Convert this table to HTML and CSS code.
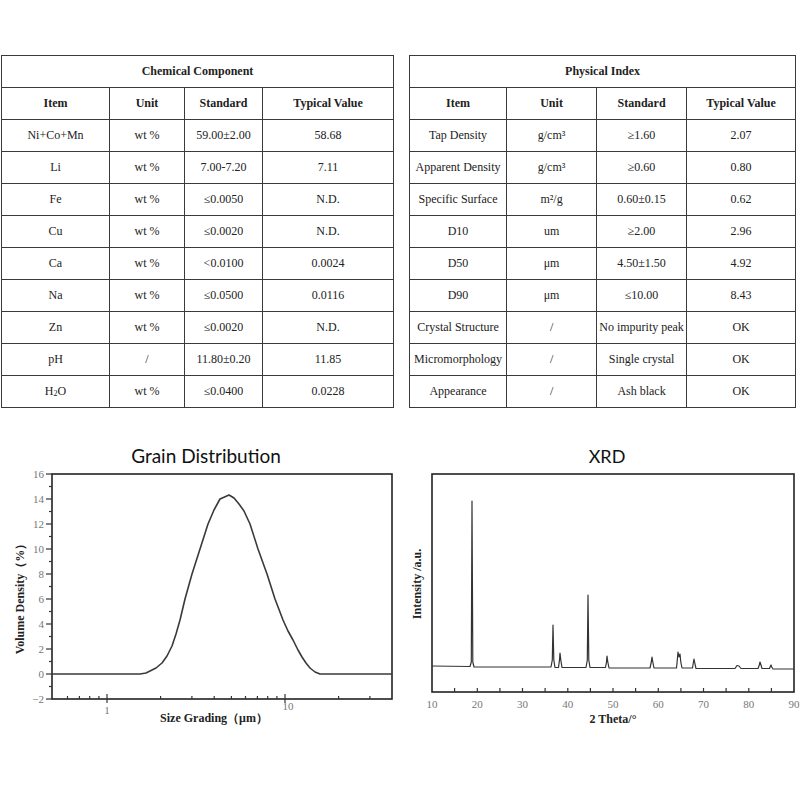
FILE: index.html
```html
<!DOCTYPE html>
<html>
<head>
<meta charset="utf-8">
<link rel="stylesheet" href="styles.css">
</head>
<body>
<div class="tables">
  <table class="spec spec-left">
    <colgroup><col style="width:108px"><col style="width:75px"><col style="width:78px"><col style="width:131px"></colgroup>
    <tr class="title"><td colspan="4">Chemical Component</td></tr>
    <tr class="head"><td>Item</td><td>Unit</td><td>Standard</td><td>Typical Value</td></tr>
    <tr><td>Ni+Co+Mn</td><td>wt %</td><td>59.00±2.00</td><td>58.68</td></tr>
    <tr><td>Li</td><td>wt %</td><td>7.00-7.20</td><td>7.11</td></tr>
    <tr><td>Fe</td><td>wt %</td><td>≤0.0050</td><td>N.D.</td></tr>
    <tr><td>Cu</td><td>wt %</td><td>≤0.0020</td><td>N.D.</td></tr>
    <tr><td>Ca</td><td>wt %</td><td>&lt;0.0100</td><td>0.0024</td></tr>
    <tr><td>Na</td><td>wt %</td><td>≤0.0500</td><td>0.0116</td></tr>
    <tr><td>Zn</td><td>wt %</td><td>≤0.0020</td><td>N.D.</td></tr>
    <tr><td>pH</td><td>/</td><td>11.80±0.20</td><td>11.85</td></tr>
    <tr><td>H<span class="sub">2</span>O</td><td>wt %</td><td>≤0.0400</td><td>0.0228</td></tr>
  </table>
  <table class="spec spec-right">
    <colgroup><col style="width:97px"><col style="width:90px"><col style="width:90px"><col style="width:109px"></colgroup>
    <tr class="title"><td colspan="4">Physical Index</td></tr>
    <tr class="head"><td>Item</td><td>Unit</td><td>Standard</td><td>Typical Value</td></tr>
    <tr><td>Tap Density</td><td>g/cm³</td><td>≥1.60</td><td>2.07</td></tr>
    <tr><td>Apparent Density</td><td>g/cm³</td><td>≥0.60</td><td>0.80</td></tr>
    <tr><td>Specific Surface</td><td>m²/g</td><td>0.60±0.15</td><td>0.62</td></tr>
    <tr><td>D10</td><td>um</td><td>≥2.00</td><td>2.96</td></tr>
    <tr><td>D50</td><td>μm</td><td>4.50±1.50</td><td>4.92</td></tr>
    <tr><td>D90</td><td>μm</td><td>≤10.00</td><td>8.43</td></tr>
    <tr><td>Crystal Structure</td><td>/</td><td>No impurity peak</td><td>OK</td></tr>
    <tr><td>Micromorphology</td><td>/</td><td>Single crystal</td><td>OK</td></tr>
    <tr><td>Appearance</td><td>/</td><td>Ash black</td><td>OK</td></tr>
  </table>
</div>

<div class="charts">
  <div class="chart chart-grain">
    <div class="chart-title">Grain Distribution</div>
    <svg class="plot" width="400" height="272" viewBox="0 0 400 272">
      <g transform="translate(0,-468)">
        <rect x="52" y="474" width="340" height="225" fill="none" stroke="#222" stroke-width="1.6"/>
        <g stroke="#333" stroke-width="1.2">
          <line x1="46" y1="474" x2="52" y2="474"/><line x1="49" y1="486.5" x2="52" y2="486.5"/>
          <line x1="46" y1="499" x2="52" y2="499"/><line x1="49" y1="511.5" x2="52" y2="511.5"/>
          <line x1="46" y1="524" x2="52" y2="524"/><line x1="49" y1="536.5" x2="52" y2="536.5"/>
          <line x1="46" y1="549" x2="52" y2="549"/><line x1="49" y1="561.5" x2="52" y2="561.5"/>
          <line x1="46" y1="574" x2="52" y2="574"/><line x1="49" y1="586.5" x2="52" y2="586.5"/>
          <line x1="46" y1="599" x2="52" y2="599"/><line x1="49" y1="611.5" x2="52" y2="611.5"/>
          <line x1="46" y1="624" x2="52" y2="624"/><line x1="49" y1="636.5" x2="52" y2="636.5"/>
          <line x1="46" y1="649" x2="52" y2="649"/><line x1="49" y1="661.5" x2="52" y2="661.5"/>
          <line x1="46" y1="674" x2="52" y2="674"/><line x1="49" y1="686.5" x2="52" y2="686.5"/>
          <line x1="46" y1="699" x2="52" y2="699"/>
          <line x1="67.5" y1="696" x2="67.5" y2="699"/><line x1="79.4" y1="696" x2="79.4" y2="699"/>
          <line x1="89.7" y1="696" x2="89.7" y2="699"/><line x1="98.9" y1="696" x2="98.9" y2="699"/>
          <line x1="107" y1="694" x2="107" y2="703"/>
          <line x1="160.6" y1="696" x2="160.6" y2="699"/><line x1="191.9" y1="696" x2="191.9" y2="699"/>
          <line x1="214.2" y1="696" x2="214.2" y2="699"/><line x1="231.4" y1="696" x2="231.4" y2="699"/>
          <line x1="245.5" y1="696" x2="245.5" y2="699"/><line x1="257.4" y1="696" x2="257.4" y2="699"/>
          <line x1="267.7" y1="696" x2="267.7" y2="699"/><line x1="276.9" y1="696" x2="276.9" y2="699"/>
          <line x1="285" y1="694" x2="285" y2="703"/>
          <line x1="338.6" y1="696" x2="338.6" y2="699"/><line x1="369.9" y1="696" x2="369.9" y2="699"/>
        </g>
        <g class="tick-label" text-anchor="end">
          <text x="44" y="478">16</text><text x="44" y="503">14</text>
          <text x="44" y="528">12</text><text x="44" y="553">10</text>
          <text x="44" y="578">8</text><text x="44" y="603">6</text>
          <text x="44" y="628">4</text><text x="44" y="653">2</text>
          <text x="44" y="678">0</text><text x="44" y="703">−2</text>
        </g>
        <g class="tick-label" text-anchor="middle">
          <text x="107" y="714">1</text><text x="288" y="710">10</text>
        </g>
        <polyline fill="none" stroke="#3a3a3a" stroke-width="1.6" stroke-linejoin="round"
          points="52,674 140,674 146,673 150,671 156,668 162,663 167,656 172,646 176,634 180,620 185,599 192,574 200,549 208,524 214,510 220,499 229,495 234,498 239,504 244,511 250,524 258,549 267,574 275,599 283,620 288,631 293,640 298,650 302,657 306,663 310,668 315,672 320,674 392,674"/>
        <text class="axis-title" x="214" y="722" text-anchor="middle">Size Grading（μm）</text>
        <text class="axis-title" transform="translate(24,596) rotate(-90)" text-anchor="middle">Volume Density（%）</text>
      </g>
    </svg>
  </div>
  <div class="chart chart-xrd">
    <div class="chart-title">XRD</div>
    <svg class="plot" width="400" height="272" viewBox="0 0 400 272">
      <g transform="translate(-400,-468)">
        <rect x="432" y="474" width="362" height="218" fill="none" stroke="#222" stroke-width="1.6"/>
        <g stroke="#333" stroke-width="1.2">
          <line x1="454.6" y1="688" x2="454.6" y2="692"/><line x1="477.3" y1="688" x2="477.3" y2="692"/>
          <line x1="499.9" y1="688" x2="499.9" y2="692"/><line x1="522.5" y1="688" x2="522.5" y2="692"/>
          <line x1="545.1" y1="688" x2="545.1" y2="692"/><line x1="567.8" y1="688" x2="567.8" y2="692"/>
          <line x1="590.4" y1="688" x2="590.4" y2="692"/><line x1="613" y1="688" x2="613" y2="692"/>
          <line x1="635.6" y1="688" x2="635.6" y2="692"/><line x1="658.3" y1="688" x2="658.3" y2="692"/>
          <line x1="680.9" y1="688" x2="680.9" y2="692"/><line x1="703.5" y1="688" x2="703.5" y2="692"/>
          <line x1="726.1" y1="688" x2="726.1" y2="692"/><line x1="748.8" y1="688" x2="748.8" y2="692"/>
          <line x1="771.4" y1="688" x2="771.4" y2="692"/>
        </g>
        <g class="tick-label" text-anchor="middle">
          <text x="432" y="708">10</text><text x="477.3" y="708">20</text>
          <text x="522.5" y="708">30</text><text x="567.8" y="708">40</text>
          <text x="613" y="708">50</text><text x="658.3" y="708">60</text>
          <text x="703.5" y="708">70</text><text x="748.8" y="708">80</text>
          <text x="794" y="708">90</text>
        </g>
        <path fill="none" stroke="#333" stroke-width="1.2" stroke-linejoin="round"
          d="M432,666 L470,666.5 L471.3,662 L472,501 L472.8,662 L474,667 L551,667 L552.3,660 L553,625 L553.8,660 L555,667.5 L558.5,667.5 L559.5,660 L560,653 L560.8,660 L562,667.5 L586,667.5 L587.3,660 L588,595 L588.8,660 L590,667.5 L605.5,667.5 L606.5,662 L607,656 L607.8,662 L609,668 L650,668 L651.3,662 L652,657 L652.8,662 L654,668 L676.5,668 L677.3,660 L678,652 L679,657 L680,654 L680.8,662 L682,668 L692.5,668 L693.3,663 L694,659 L694.8,663 L696,668.5 L735,668.5 L737,665.5 L739,666 L741,668.5 L758,668.5 L759.3,665 L760,662 L761,665 L762,668.5 L769.5,668.5 L770.5,666 L771,665 L771.7,667 L773,669 L794,669"/>
        <text class="axis-title" x="613" y="723" text-anchor="middle">2 Theta/°</text>
        <text class="axis-title" transform="translate(421,584) rotate(-90)" text-anchor="middle">Intensity /a.u.</text>
      </g>
    </svg>
  </div>
</div>
</body>
</html>
```

FILE: styles.css
```css
html, body {
  margin: 0;
  padding: 0;
  background: #fff;
}

body {
  width: 800px;
  font-family: "Liberation Serif", "Times New Roman", serif;
  color: #222;
}

.tables {
  display: flex;
  align-items: flex-start;
  gap: 15px;
  padding: 55px 0 0 1px;
}

.spec {
  border-collapse: collapse;
  table-layout: fixed;
  font-size: 12px;
}

.spec-left { width: 392px; }
.spec-right { width: 386px; }

.spec td {
  border: 1px solid #3a3a3a;
  height: 31px;
  padding: 0;
  text-align: center;
  vertical-align: middle;
  white-space: nowrap;
}

.spec .title td,
.spec .head td {
  font-weight: bold;
}

.sub {
  font-size: 8px;
  vertical-align: -1px;
}

.charts {
  display: flex;
  margin-top: 36px;
}

.chart {
  width: 400px;
  display: flex;
  flex-direction: column;
}

.chart-title {
  font-family: Lato, "Open Sans", sans-serif;
  font-size: 19px;
  line-height: 24px;
  height: 24px;
  text-align: center;
  color: #111;
}

.chart-grain .chart-title { padding-left: 12px; }
.chart-xrd .chart-title { padding-left: 14px; font-size: 18px; }

.plot {
  display: block;
}

.tick-label {
  font-family: "Liberation Serif", serif;
  font-size: 11px;
  fill: #777;
}

.axis-title {
  font-family: "Liberation Serif", serif;
  font-size: 12px;
  font-weight: bold;
  fill: #222;
}
```
